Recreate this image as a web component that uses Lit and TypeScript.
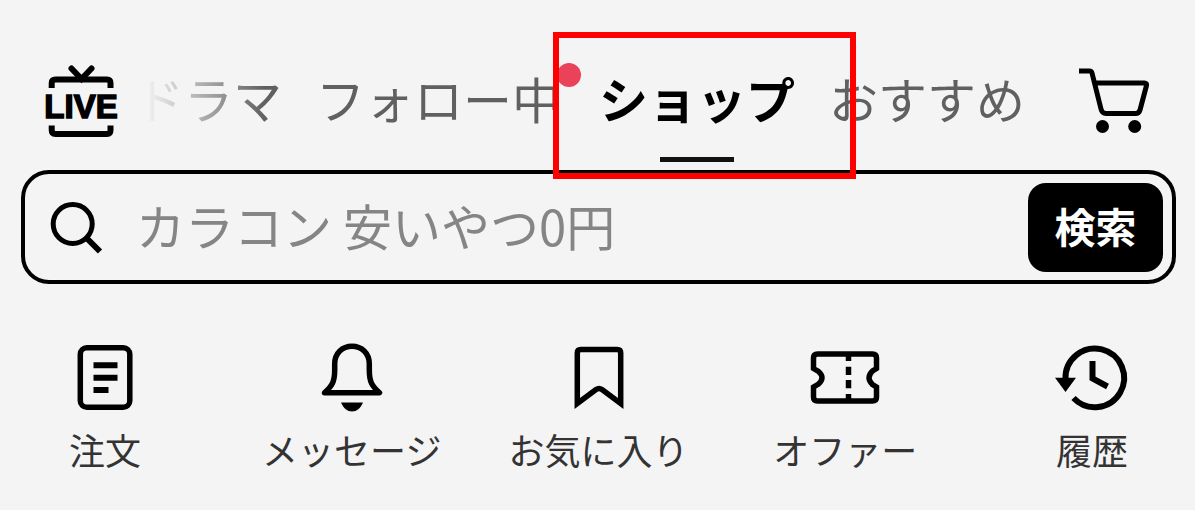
import { LitElement, html, svg, css } from "lit";
import type { SVGTemplateResult } from "lit";
import { customElement, state } from "lit/decorators.js";
import { classMap } from "lit/directives/class-map.js";

interface Shortcut {
  label: string;
  icon: SVGTemplateResult;
}

const tabs = [
  { label: "ドラマ", dot: false },
  { label: "フォロー中", dot: true },
  { label: "ショップ", dot: false },
  { label: "おすすめ", dot: false },
];

// Shortcut icons share a canvas that is centred on x = 0.
const shortcuts: Shortcut[] = [
  {
    label: "注文",
    icon: svg`<rect x="-24.7" y="4.8" width="49.5" height="59.5" rx="6.5"/>
      <path stroke-width="6" d="M-11.5 22.3h24M-11.5 34.7h24M-11.5 47h15"/>`,
  },
  {
    label: "メッセージ",
    icon: svg`<path stroke-linejoin="round" d="M-27.5 49.7C-20 43-17.3 39-17.3 27V21C-17.3 10-9.5 3.3 0 3.3S17.3 10 17.3 21V27C17.3 39 20 43 27.5 49.7Z"/>
      <path class="solid" d="M-11 59.5H11C8.5 65.5 4.5 68.5 0 68.5S-8.5 65.5-11 59.5Z"/>`,
  },
  {
    label: "お気に入り",
    icon: svg`<path d="M-21.7 60.5V10Q-21.7 6.5-18.2 6.5H18.2Q21.7 6.5 21.7 10V60.5L3 46.5Q0 44.5-3 46.5Z"/>`,
  },
  {
    label: "オファー",
    icon: svg`<path d="M-27.5 11H27.5Q31.5 11 31.5 15V25.5L27.5 28Q20.5 34.7 27.5 41.5L31.5 44V54Q31.5 58 27.5 58H-27.5Q-31.5 58-31.5 54V44L-26.5 41Q-19.5 34.7-26.5 28.5L-31.5 25.5V15Q-31.5 11-27.5 11Z"/>
      <path d="M3.5 13V18M3.5 23.7V32M3.5 37V45.3M3.5 51V57"/>`,
  },
  {
    label: "履歴",
    icon: svg`<path stroke-width="6" d="M-26.5 36A29.3 29.3 0 1 1-18.5 55"/>
      <path stroke-width="6" d="M.5 18V35.500L15.500 43.500"/>
      <path class="solid" d="M-37 34.7H-16L-26.5 49Z"/>`,
  },
];

@customElement("app-root")
export class AppRoot extends LitElement {
  static styles = css`
    :host {
      display: block;
      position: relative;
      min-height: 100vh;
      box-sizing: border-box;
      overflow: hidden;
      background: #f4f4f4;
      color: #000;
      font-family: "Noto Sans CJK JP", sans-serif;
    }
    button,
    input {
      font: inherit;
      color: inherit;
      background: none;
      border: 0;
      padding: 0;
      margin: 0;
    }
    button {
      cursor: pointer;
      white-space: nowrap;
    }
    svg {
      display: block;
      flex: none;
      fill: none;
      stroke: #000;
      stroke-width: 5;
      overflow: visible;
    }
    .solid {
      fill: #000;
      stroke: none;
    }
    .header {
      display: flex;
      align-items: flex-start;
      padding: 32px 45px 0 43px;
    }
    .action {
      padding-top: 32px;
    }
    .live-text {
      fill: #000;
      stroke-width: 1.5;
      font: 700 33px "Liberation Sans", sans-serif;
      text-anchor: middle;
    }
    .tabs {
      flex: 1;
      min-width: 0;
      display: flex;
      justify-content: flex-end;
      gap: 34px;
      margin: 0 53px 0 14px;
      overflow: hidden;
      -webkit-mask-image: linear-gradient(to right, transparent 12px, #000 132px);
      mask-image: linear-gradient(to right, transparent 12px, #000 132px);
    }
    .tab {
      position: relative;
      flex: none;
      display: flex;
      flex-direction: column;
      align-items: center;
      height: 130px;
      padding-top: 30px;
      font-size: 49px;
      line-height: 72px;
      color: #606060;
    }
    .tab.active {
      padding-left: 4px;
      color: #000;
      font-weight: 700;
    }
    .tab.active::after {
      content: "";
      width: 74px;
      height: 5px;
      margin-top: 23px;
      background: #111;
    }
    .dot {
      position: absolute;
      top: 31px;
      right: -20px;
      width: 24px;
      height: 24px;
      border-radius: 50%;
      background: #ea4359;
    }
    .search {
      display: flex;
      align-items: center;
      box-sizing: border-box;
      height: 114px;
      margin: 8px 19px 0 21px;
      padding: 0 9px 0 24px;
      border: 4px solid #000;
      border-radius: 28px;
    }
    .query {
      flex: 1;
      min-width: 0;
      height: 78px;
      margin: 0 20px 0 35px;
      padding-bottom: 6px;
      box-sizing: border-box;
      font-size: 49px;
      outline: none;
    }
    .query::placeholder {
      color: #858585;
      opacity: 1;
    }
    .submit {
      width: 135px;
      height: 89px;
      padding-bottom: 4px;
      border-radius: 18px;
      background: #000;
      color: #fff;
      font-size: 41px;
      font-weight: 700;
      line-height: 60px;
    }
    .shortcuts {
      display: flex;
      justify-content: space-between;
      padding: 59px 11px 0 13px;
    }
    .shortcuts svg {
      stroke-width: 5.5;
    }
    .shortcut {
      display: flex;
      flex-direction: column;
      align-items: center;
      gap: 10px;
      width: 184px;
      font-size: 36px;
      line-height: 52px;
      color: #333;
    }
    .highlight {
      position: absolute;
      top: 32px;
      left: 553px;
      width: 303px;
      height: 147px;
      box-sizing: border-box;
      border: 6px solid #f00;
      pointer-events: none;
    }
  `;

  @state() private active = "ショップ";

  render() {
    return html`
      <header class="header">
        <button class="action" aria-label="LIVE">
          <svg width="76" height="76" viewBox="0 0 76 76">
            <path stroke-width="6" stroke-linecap="round" d="M28.5 4.5 38.5 15 48.5 4.5" />
            <path
              stroke-width="6"
              stroke-linejoin="round"
              d="M8.7 24V19Q8.7 15.5 12.5 15.5H64Q67.5 15.5 67.5 19V24M8.7 61.5V66Q8.7 70 12.5 70H64Q67.5 70 67.5 66V61.5"
            />
            <text class="live-text" x="38" y="54">LIVE</text>
          </svg>
        </button>
        <nav class="tabs">
          ${tabs.map(
            (tab) => html`<button
              class=${classMap({ tab: true, active: tab.label === this.active })}
              @click=${() => (this.active = tab.label)}
            >
              ${tab.label}${tab.dot ? html`<span class="dot"></span>` : ""}
            </button>`
          )}
        </nav>
        <button class="action" aria-label="カート">
          <svg width="72" height="72" viewBox="0 0 72 72">
            <path
              stroke-linejoin="round"
              d="M1 7H11.5Q13.5 7 14 9L23 45Q24 49.5 28 49.5H57.5Q61 49.5 62 46L68.5 21.5Q69 19 66.5 19H17"
            />
            <circle class="solid" cx="24.5" cy="62.5" r="6.5" />
            <circle class="solid" cx="56.7" cy="62.5" r="6.5" />
          </svg>
        </button>
      </header>
      <form class="search" role="search" @submit=${(e: Event) => e.preventDefault()}>
        <svg width="52" height="52" viewBox="0 0 52 52">
          <circle cx="23.7" cy="23" r="19.5" />
          <path stroke-width="6" d="M37 36.5 51 50.5" />
        </svg>
        <input class="query" type="text" aria-label="検索" placeholder="カラコン 安いやつ0円" />
        <button class="submit" type="submit">検索</button>
      </form>
      <nav class="shortcuts">
        ${shortcuts.map(
          (item) => html`<button class="shortcut">
            <svg width="76" height="70" viewBox="-38 0 76 70">${item.icon}</svg>
            <span>${item.label}</span>
          </button>`
        )}
      </nav>
      <div class="highlight"></div>
    `;
  }
}
